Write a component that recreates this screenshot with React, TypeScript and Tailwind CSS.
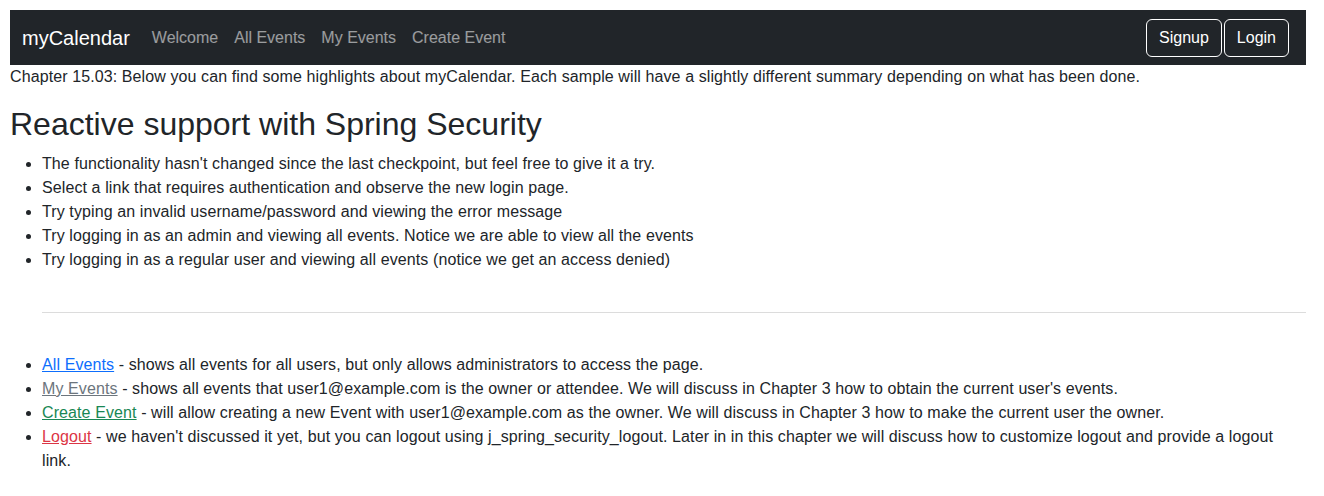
const items = [
  "The functionality hasn't changed since the last checkpoint, but feel free to give it a try.",
  "Select a link that requires authentication and observe the new login page.",
  "Try typing an invalid username/password and viewing the error message",
  "Try logging in as an admin and viewing all events. Notice we are able to view all the events",
  "Try logging in as a regular user and viewing all events (notice we get an access denied)",
];

const App = () => {
  return (
    <div className="pt-[10px] pl-[10px] pr-[18px] text-[16px] leading-[24px] tracking-[0.1px] text-[#212529] font-['Liberation_Sans',Arial,sans-serif]">
      {/* Navbar */}
      <nav className="flex items-center h-[55px] bg-[#212529] pl-[12px] pr-[17px] tracking-normal">
        <span className="text-[20px] text-white mr-[14px]">myCalendar</span>
        <div className="flex">
          {["Welcome", "All Events", "My Events", "Create Event"].map((l) => (
            <a key={l} className="px-[8px] text-white/55">{l}</a>
          ))}
        </div>
        <div className="ml-auto flex gap-[2px]">
          <button className="border border-white text-white rounded-[6px] px-[12px] py-[6px] leading-[24px]">Signup</button>
          <button className="border border-white text-white rounded-[6px] px-[12px] py-[6px] leading-[24px]">Login</button>
        </div>
      </nav>

      <p className="mb-[16px]">
        Chapter 15.03: Below you can find some highlights about myCalendar. Each sample will have a slightly different summary depending on what has been done.
      </p>
      <h2 className="text-[32px] leading-[38px] font-medium tracking-normal mb-[9px]">Reactive support with Spring Security</h2>

      <ul className="list-disc pl-[32px]">
        {items.map((t) => (
          <li key={t}>{t}</li>
        ))}
      </ul>

      {/* divider */}
      <div className="pl-[32px] pt-[40px] pb-[40px]">
        <hr className="border-t border-[#dcdcdc]" />
      </div>

      <ul className="list-disc pl-[32px]">
        <li>
          <a className="text-[#0d6efd] underline">All Events</a> - shows all events for all users, but only allows administrators to access the page.
        </li>
        <li>
          <a className="text-[#6c757d] underline">My Events</a> - shows all events that user1@example.com is the owner or attendee. We will discuss in Chapter 3 how to obtain the current user's events.
        </li>
        <li>
          <a className="text-[#198754] underline">Create Event</a> - will allow creating a new Event with user1@example.com as the owner. We will discuss in Chapter 3 how to make the current user the owner.
        </li>
        <li>
          <a className="text-[#dc3545] underline">Logout</a> - we haven't discussed it yet, but you can logout using j_spring_security_logout. Later in in this chapter we will discuss how to customize logout and provide a logout link.
        </li>
      </ul>
    </div>
  );
};

export default App;
